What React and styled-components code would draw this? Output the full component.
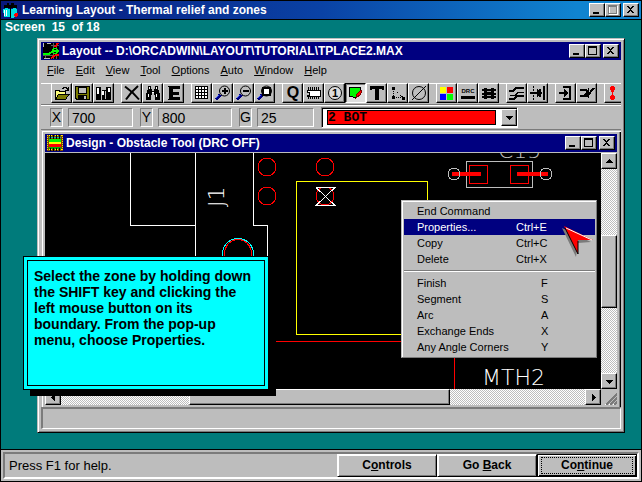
import React from 'react';
import styled, { createGlobalStyle, css } from 'styled-components';

const FACE = '#bdbdbd';
const SHADOW = '#7b7b7b';
const NAVY = '#000080';
const TEAL = '#007b7b';

const GlobalStyle = createGlobalStyle`
  * {
    box-sizing: border-box;
  }
  body {
    margin: 0;
    font-family: 'Liberation Sans', Arial, sans-serif;
    font-size: 11px;
    color: #000;
  }
  button, input, select {
    font: inherit;
    color: inherit;
    margin: 0;
    padding: 0;
    border-radius: 0;
  }
`;

const raised = css`
  background: ${FACE};
  border: 1px solid;
  border-color: #fff #000 #000 #fff;
  box-shadow: inset -1px -1px 0 ${SHADOW};
`;

const Frame = styled.div`
  display: flex;
  flex-direction: column;
  min-height: 100vh;
  border: 1px solid #000;
`;

const TitleBar = styled.header`
  display: flex;
  align-items: center;
  flex: none;
  height: 18px;
  padding: 0 2px;
  gap: 3px;
  color: #fff;
  background: ${({ $fade }) =>
    $fade ? 'linear-gradient(90deg, #08187b, #0a42a5 50%, #1084d0 90%)' : NAVY};
`;

const Title = styled.h1`
  flex: 1;
  margin: 0;
  font-size: 12px;
  line-height: 16px;
  white-space: nowrap;
`;

const WindowButtons = styled.div`
  display: flex;
`;

const WindowButton = styled.button`
  ${raised}
  width: 16px;
  height: 14px;
  margin-left: ${({ $apart }) => ($apart ? 2 : 0)}px;

  svg {
    display: block;
  }
`;

const Stage = styled.main`
  position: relative;
  display: flex;
  flex-direction: column;
  flex: 1;
  padding: 0 16px 16px 36px;
  border: solid #000;
  border-width: 1px 0;
  background: ${TEAL};
`;

const Progress = styled.div`
  height: 18px;
  margin-left: -32px;
  font-size: 12px;
  font-weight: bold;
  line-height: 14px;
  color: #fff;
  white-space: pre;
`;

const LayoutWindow = styled.section`
  display: flex;
  flex-direction: column;
  flex: 1;
  padding: 3px;
  background: ${FACE};
  border: 1px solid;
  border-color: ${FACE} #000 #000 ${FACE};
  box-shadow: inset 1px 1px 0 #fff, inset -1px -1px 0 ${SHADOW};
`;

const MenuBar = styled.nav`
  display: flex;
  gap: 11px;
  height: 23px;
  padding: 2px 6px;
`;

const MenuButton = styled.button`
  border: 0;
  background: none;
  height: 16px;
  line-height: 16px;
`;

const Toolbar = styled.div`
  display: flex;
  gap: 7px;
  height: 22px;
  padding-left: 10px;
  overflow: hidden;
  border-bottom: 1px solid ${SHADOW};
  box-shadow: inset 0 1px 0 #fff;
`;

const ToolGroup = styled.div`
  display: flex;
  flex: none;
`;

const ToolButton = styled.button`
  ${raised}
  display: flex;
  align-items: center;
  justify-content: center;
  width: 21px;
  height: 20px;
  ${({ $pressed }) =>
    $pressed &&
    css`
      border-color: #000 #fff #fff #000;
      box-shadow: inset 1px 1px 0 ${SHADOW};
      background: #dedede;
    `}
`;

const CoordBar = styled.form`
  display: flex;
  align-items: center;
  gap: 7px;
  height: 25px;
  padding-left: 9px;
  border-top: 1px solid #fff;
  border-bottom: 1px solid ${SHADOW};
  font-size: 14px;
`;

const sunken = css`
  border: 1px solid;
  border-color: ${SHADOW} #fff #fff ${SHADOW};
`;

const Coord = styled.div`
  display: flex;
  gap: 5px;
`;

const CoordLabel = styled.label`
  ${sunken}
  width: 13px;
  height: 19px;
  line-height: 17px;
  display: flex;
  justify-content: center;
`;

const CoordInput = styled.input`
  ${sunken}
  width: ${({ $width }) => $width}px;
  height: 19px;
  padding: 0 3px;
  background: ${FACE};
`;

const LayerBox = styled.div`
  display: flex;
  align-items: stretch;
  width: 197px;
  height: 21px;
  padding: 1px 0 1px 5px;
  background: #fff;
  border: 1px solid;
  border-color: ${SHADOW} #fff #fff ${SHADOW};
  box-shadow: inset 1px 1px 0 #000;
`;

const LayerSelect = styled.select`
  flex: 1;
  min-width: 0;
  margin: 1px 5px 1px 0;
  padding-top: 1px;
  appearance: none;
  border: 1px solid #000;
  background: #f00;
  font-family: 'Liberation Mono', monospace;
  font-size: 13px;
  font-weight: bold;
  line-height: 12px;
`;

const DropMark = styled.span`
  ${raised}
  display: flex;
  align-items: center;
  justify-content: center;
  width: 16px;
  pointer-events: none;
`;

const DesignWindow = styled.section`
  display: flex;
  flex-direction: column;
  flex: 1;
  padding: 4px 4px 2px;
  box-shadow: inset 1px 1px 0 ${FACE}, inset 2px 2px 0 #fff,
    inset -1px 0 0 #000, inset -2px 0 0 ${SHADOW};
`;

const Work = styled.div`
  display: grid;
  grid-template-columns: 1fr 16px;
  grid-template-rows: 1fr 16px;
  flex: 1;
  padding-top: 1px;
`;

const Canvas = styled.div`
  position: relative;
  display: flex;
  background: #000;
`;

const Drawing = styled.svg`
  flex: 1;
  width: 100%;
  height: auto;
  min-height: 0;
  font-family: 'DejaVu Sans', sans-serif;
  font-size: 22px;
  font-weight: 200;
`;

const ScrollBar = styled.div`
  display: flex;
  flex-direction: ${({ $vertical }) => ($vertical ? 'column' : 'row')};
  background: repeating-conic-gradient(#fff 0 25%, ${FACE} 0 50%) 0 0 / 2px 2px;
`;

const ScrollButton = styled.button`
  ${raised}
  display: flex;
  align-items: center;
  justify-content: center;
  flex: none;
  width: 16px;
  height: 16px;
`;

const Track = styled.div`
  flex: ${({ $share }) => $share};
`;

const Thumb = styled(Track)`
  ${raised}
`;

const Status = styled.footer`
  height: 22px;
  border: 2px solid;
  border-color: ${SHADOW} #fff #fff ${SHADOW};
  border-bottom-width: 1px;
  border-right-width: 1px;
`;

const PopupMenu = styled.div`
  position: absolute;
  left: 356px;
  top: 47px;
  width: 196px;
  padding: 2px 1px 2px 2px;
  background: ${FACE};
  border: 1px solid;
  border-color: ${FACE} ${SHADOW} ${SHADOW} ${FACE};
  box-shadow: inset 1px 1px 0 #fff;
`;

const PopupItem = styled.button`
  display: grid;
  grid-template-columns: ${({ $wide }) => ($wide ? 99 : 124)}px 1fr;
  width: 100%;
  height: 16px;
  padding: 0 0 0 13px;
  border: 0;
  line-height: 16px;
  text-align: left;
  background: ${({ $active }) => ($active ? NAVY : 'transparent')};
  color: ${({ $active }) => ($active ? '#fff' : '#000')};
`;

const Separator = styled.hr`
  height: 2px;
  margin: 3px 0;
  border: solid;
  border-width: 1px 0;
  border-color: ${SHADOW} transparent #fff;
`;

const Pointer = styled.svg`
  position: absolute;
  left: 159px;
  top: 24px;
`;

const Callout = styled.aside`
  position: absolute;
  left: 22px;
  top: 236px;
  width: 246px;
  padding: 3px;
  background: #0ff;
  border: 1px solid #000;
  box-shadow: 7px 6px 0 #000;
`;

const CalloutText = styled.p`
  margin: 0;
  padding: 7px 8px 37px 6px;
  border: 1px solid #000;
  font-size: 14px;
  font-weight: bold;
  line-height: 16px;
`;

const BottomBar = styled.footer`
  padding: 2px;
  background: ${FACE};
`;

const BottomPanel = styled.div`
  display: flex;
  align-items: center;
  padding-left: 4px;
  border: 2px solid;
  border-color: ${SHADOW} #fff #fff ${SHADOW};
`;

const Hint = styled.span`
  flex: 1;
  font-size: 13px;
`;

const NavButton = styled.button`
  width: 100px;
  height: 23px;
  padding: 1px;
  background: ${FACE};
  border: 1px solid;
  border-color: ${({ $current }) => ($current ? '#000' : '#fff #000 #000 #fff')};
  box-shadow: inset 1px 1px 0 #fff, inset -1px -1px 0
    ${({ $current }) => ($current ? '#000' : SHADOW)};
  font-size: 12px;
  font-weight: bold;

  span {
    display: block;
    margin: 0 2px;
    line-height: 15px;
    border: 1px dotted ${({ $current }) => ($current ? '#000' : 'transparent')};
  }
`;

function Icon({ children, size = 16 }) {
  return (
    <svg
      width={size}
      height={size}
      viewBox="0 0 16 16"
      fill="none"
      stroke="#000"
      shapeRendering="crispEdges"
      aria-hidden="true"
    >
      {children}
    </svg>
  );
}

function Glyph({ x, y, size, children }) {
  return (
    <text
      x={x}
      y={y}
      fontSize={size}
      fontWeight="bold"
      textAnchor="middle"
      fill="#000"
      stroke="none"
    >
      {children}
    </text>
  );
}

const lens = <circle cx="9.5" cy="6" r="5" shapeRendering="auto" />;
const handle = (
  <>
    <path d="M5.5 9.5L1 14.5" stroke="#000080" strokeWidth="3" />
    <path d="M4 10L1 13" stroke="#3050ff" />
  </>
);

const icons = {
  open: (
    <>
      <path d="M1.5 14V5.5H5L6 6.5H11.5V9" fill="#ffff7b" />
      <path d="M1.5 14.5L4.5 9.5H15L11.5 14.5Z" fill="#7b7b00" />
      <path d="M8 3.5H9V2.5H12V3.5H13V5.5M11 5.5H15M14.5 2V5" />
    </>
  ),
  save: (
    <>
      <path d="M.5 1.5H14.5V14.5H2L.5 13Z" fill="#7b7b00" />
      <path d="M3.5 2H11.5V8.5H3.5Z" fill={FACE} />
      <path d="M3 10H12V15H3Z" fill="#000" stroke="none" />
      <path d="M9 11H11V14H9Z" fill={FACE} stroke="none" />
    </>
  ),
  library: (
    <>
      <path
        d="M0 2H5V15H0ZM6 5H10V15H6ZM10 2H15V15H10Z"
        fill="#000"
        stroke="none"
      />
      <path d="M1 3H3V9H1ZM6 6H8V10H6ZM12 3H14V7H12Z" fill="#fff" stroke="none" />
      <path d="M5.5 2V15M9.5 6V14" stroke={FACE} />
    </>
  ),
  remove: (
    <g shapeRendering="auto">
      <path d="M1 1.5Q9 7 15 14.5" strokeWidth="2" />
      <path d="M14 1Q7 7 2 14.5" strokeWidth="2" />
    </g>
  ),
  find: (
    <>
      <path
        d="M3 1H6V4H7V6H9V4H10V1H13V4L15 9V15H10V10H9V8H7V10H6V15H1V9L3 4Z"
        fill="#000"
        stroke="none"
      />
      <path d="M4.5 2V4M11.5 2V4M3.5 9V12M11.5 9V12M7 7.5H9" stroke="#fff" />
    </>
  ),
  edit: (
    <path
      d="M2 1H14V4H7V6.500H13V9.500H7V12H14V15H2V14H3V2H2Z"
      fill="#000"
      stroke="none"
    />
  ),
  grid: (
    <>
      <path d="M1.5 1.5H13.5V13.5H1.5Z" fill="#fff" />
      <path d="M1 4.5H14M1 7.5H14M1 10.5H14M4.5 1V14M7.5 1V14M10.5 1V14" />
    </>
  ),
  zoomIn: (
    <>
      {handle}
      {lens}
      <path d="M9.5 3V9M6.5 6H12.5" strokeWidth="2" />
    </>
  ),
  zoomOut: (
    <>
      {handle}
      {lens}
      <path d="M6.5 6H12.5" strokeWidth="2" />
    </>
  ),
  zoomAll: (
    <>
      {handle}
      {lens}
      <path d="M6 2.5H13V9.5H6Z" fill="#fff" strokeWidth="2" />
    </>
  ),
  query: <Glyph x="8" y="13" size="16">Q</Glyph>,
  chip: (
    <>
      <path d="M1.5 5.5H14.5V11.5H1.5V10H3V7H1.5Z" fill="#fff" />
      <path d="M2.5 2V5M4.5 2V5M6.5 2V5M8.5 2V5M10.5 2V5M12.5 2V5M2.5 12V14M4.5 12V14M6.5 12V14M8.5 12V14M10.5 12V14M12.5 12V14" />
    </>
  ),
  pin: (
    <>
      <circle cx="8" cy="8" r="6.5" fill="#dedede" shapeRendering="auto" />
      <Glyph x="8" y="12" size="11">1</Glyph>
    </>
  ),
  obstacle: (
    <>
      <path d="M1.5 2.5H12.5V6L8 12.5H6L4 11.5H1.5Z" fill="#00f700" />
      <path d="M13 5L9 9L8 13L12 10L14 6Z" fill="#f00" stroke="#7b0000" />
    </>
  ),
  text: <path d="M1 1H15V5H13V4H10V15H6V4H3V5H1Z" fill="#000" stroke="none" />,
  connect: (
    <>
      <path d="M3 3.5V12.5H13L3 3.5" strokeDasharray="1 1" />
      <path d="M2 2H5V5H2ZM2 11H5V14H2ZM12 12H15V15H12Z" fill="#000" stroke="none" />
    </>
  ),
  pad: (
    <g shapeRendering="auto">
      <circle cx="8" cy="8" r="6.5" />
      <path d="M1 15L15 1" />
    </g>
  ),
  color: (
    <g stroke="none">
      <path d="M1 2H7V8H1Z" fill="#ff0" />
      <path d="M8 2H14V8H8Z" fill="#f00" />
      <path d="M1 9H7V15H1Z" fill="#00f" />
      <path d="M8 9H14V15H8Z" fill="#0f0" />
    </g>
  ),
  drc: (
    <>
      <Glyph x="8" y="8" size="6">DRC</Glyph>
      <path d="M1 11H15V14H1Z" fill="#000" stroke="none" />
    </>
  ),
  reconnect: (
    <>
      <path d="M3 3H6V4H10V3H13V14H10V13H6V14H3Z" fill="#000" stroke="none" />
      <path d="M1 5H15M1 8.5H15M1 12H15" strokeWidth="2" />
      <path d="M6 6.5H10M6 10.5H10" stroke="#9c9c9c" />
    </>
  ),
  autopath: (
    <>
      <path d="M0 6H4L7 3H15M0 14H5L8 11H15" strokeWidth="2" />
      <path d="M1 10.5H6L9 7.5H15" />
    </>
  ),
  shove: (
    <>
      <path d="M3.5 1V15" strokeDasharray="2 1" />
      <path d="M0 8H10M14 1V15M10 4V12" strokeWidth="2" />
      <path d="M7 4L12 8L7 12Z" fill="#000" />
    </>
  ),
  editSegment: (
    <>
      <path d="M5 2H12V14H5M1 8H8" strokeWidth="2" />
      <path d="M6 4L10 8L6 12Z" fill="#000" />
    </>
  ),
  addRoute: (
    <>
      <path d="M1 4.5H7L8 6M1 11H8L15 3" strokeWidth="2" />
      <path d="M5 11L9 5V12Z" fill="#000" />
    </>
  ),
  abort: (
    <path
      d="M4 1H7V2H8V5H7V7H6V10H7V11H8V14H7V15H4V14H3V11H4V10H5V7H4V5H3V2H4Z"
      fill="#f00"
      stroke="none"
    />
  ),
};

const toolGroups = [
  ['open', 'save', 'library'],
  ['remove', 'find', 'edit'],
  ['grid', 'zoomIn', 'zoomOut', 'zoomAll'],
  ['query', 'chip', 'pin', 'obstacle', 'text', 'connect', 'pad'],
  ['color', 'drc', 'reconnect'],
  ['autopath', 'shove'],
  ['editSegment', 'addRoute'],
  ['abort'],
];

const menus = ['File', 'Edit', 'View', 'Tool', 'Options', 'Auto', 'Window', 'Help'];

const commands = [
  ['End Command', ''],
  ['Properties...', 'Ctrl+E'],
  ['Copy', 'Ctrl+C'],
  ['Delete', 'Ctrl+X'],
];

const shapes = [
  ['Finish', 'F'],
  ['Segment', 'S'],
  ['Arc', 'A'],
  ['Exchange Ends', 'X'],
  ['Any Angle Corners', 'Y'],
];

function Controls({ disabled }) {
  const ink = disabled ? SHADOW : '#000';
  return (
    <WindowButtons>
      <WindowButton aria-label="Minimize">
        <svg width="14" height="12" shapeRendering="crispEdges">
          <path d="M3 8H9V10H3Z" />
        </svg>
      </WindowButton>
      <WindowButton aria-label="Maximize" disabled={disabled}>
        <svg width="14" height="12" fill="none" shapeRendering="crispEdges">
          {disabled && <path d="M3.5 2.5H11.5V10.5H3.5Z" stroke="#fff" />}
          <path d="M2.5 1.5H10.5V9.5H2.5ZM2 2.5H11" stroke={ink} />
        </svg>
      </WindowButton>
      <WindowButton $apart aria-label="Close">
        <svg width="14" height="12" shapeRendering="crispEdges">
          <path d="M3 2H5V3H6V4H7V3H8V2H10V3H9V4H8V5H7V6H8V7H9V8H10V9H8V8H7V7H6V8H5V9H3V8H4V7H5V6H6V5H5V4H4V3H3Z" />
        </svg>
      </WindowButton>
    </WindowButtons>
  );
}

function Arrow({ turn = 0 }) {
  return (
    <svg width="9" height="9" shapeRendering="crispEdges" aria-hidden="true">
      <path d="M1 3H8V4H7V5H6V6H5V7H4V6H3V5H2V4H1Z" transform={`rotate(${turn} 4.5 4.5)`} />
    </svg>
  );
}

function BookIcon() {
  return (
    <Icon>
      <path d="M1 3H4V1H6V3H8V1H11V3H14V6H1Z" fill="#000" stroke="none" />
      <path d="M0 7L3 6L7 7L8 16L5 15H1ZM8 7L12 6L14 7V15L8 16Z" fill="#00dede" stroke="none" />
      <path d="M1.5 8V14M3.5 8V14" stroke="#fff" />
      <path d="M7.5 6V16" />
      <path d="M12 11H15V14H14V15H12V14H11V12H12Z" fill="#f00" stroke="none" />
    </Icon>
  );
}

function LayoutIcon() {
  return (
    <Icon>
      <path d="M0 0H16V16H0Z" fill="#000" stroke="none" />
      <path d="M10.5 0V16M13.5 0V16M2.5 12V16M0 12.5H16M8 2.5H16" stroke="#5a5a5a" />
      <path d="M0 11H6L10 8H16" stroke="#0f0" strokeWidth="2" />
      <circle cx="12" cy="8" r="2.5" stroke="#0f0" />
      <path d="M12 4L15 0M8 15L13 12H16" stroke="#f00" strokeWidth="2" />
      <path d="M1 15.5H7M.5 0V4M4 .5H8" stroke="#bdbdbd" />
    </Icon>
  );
}

function DesignIcon() {
  return (
    <Icon>
      <path d="M0 0H16V16H0Z" fill="#7b4a00" stroke="none" />
      <path d="M2 5.5H14" stroke="#00f700" strokeWidth="3" />
      <path d="M2 8H14" stroke="#ff0" strokeWidth="2" />
      <path d="M2 10.5H14" stroke="#f00" strokeWidth="3" />
      <path d="M2 2.5H14" stroke="#00b5b5" />
      <path d="M2 13H14" stroke="#00b500" strokeWidth="2" />
      <path d="M0 14.5H16M0 .5H16" stroke="#ff0" strokeDasharray="1 1" />
      <path d="M3.5 0V4M6.5 0V4M9.5 0V4M12.5 0V4M3.5 13V16M6.5 13V16M9.5 13V16M12.5 13V16" />
      <path d="M.5 0V16M15 0V16" stroke="#ffde00" strokeDasharray="1 1" />
    </Icon>
  );
}

function Board() {
  return (
    <Drawing fill="none" stroke="#fff" shapeRendering="crispEdges">
      <path d="M85.5 0V72.5H150.5M150.5 0V237M208.5 0V72.5H222.5V237" />
      <path d="M177.5 237V101A15.5 15.5 0 0 1 208.5 101V237" stroke="#0ff" />
      <path d="M179.5 237V101A13.5 14.5 0 0 1 206.5 101V237" stroke="#f00" />
      <g stroke="#f00">
        <circle cx="222" cy="14" r="9" />
        <circle cx="280" cy="14" r="9" />
        <circle cx="222" cy="43" r="9" />
        <circle cx="280" cy="43" r="9" />
        <path d="M230 188.5H409.5V237" />
      </g>
      <path d="M271 34.5H290L271 52.5H290L271 34.5" />
      <path d="M251.5 28.5H382.5V181.5H251.5Z" stroke="#ff0" />
      <path d="M421.5 8.5H487.5V34.5H421.5Z" stroke={FACE} />
      <path d="M424.5 12.5H442.5V30.5H424.5ZM465.5 12.5H483.5V30.5H465.5Z" stroke="#f00" />
      <path d="M407 21H436M472 21H503" stroke="#f00" strokeWidth="4" />
      <circle cx="409" cy="21" r="6" stroke={FACE} />
      <circle cx="501" cy="21" r="6" stroke={FACE} />
      <g fill="#fff" stroke="none">
        <text x="453" y="5" fill={FACE}>C15</text>
        <text x="437" y="232">MTH2</text>
        <text transform="translate(179 54) rotate(-90)">J1</text>
      </g>
    </Drawing>
  );
}

function Popup() {
  return (
    <PopupMenu role="menu">
      {commands.map(([name, keys]) => (
        <PopupItem key={name} role="menuitem" $wide $active={name === 'Properties...'}>
          <span>{name}</span>
          <span>{keys}</span>
        </PopupItem>
      ))}
      <Separator />
      {shapes.map(([name, keys]) => (
        <PopupItem key={name} role="menuitem">
          <span>{name}</span>
          <span>{keys}</span>
        </PopupItem>
      ))}
      <Pointer width="36" height="34" aria-hidden="true">
        <path d="M1 3L15 32L17 18L30 17Z" fill={SHADOW} />
        <path d="M3 1L17 29V15L32 15Z" fill="#f00" />
        <path d="M4 3L17 29V16" fill="none" stroke="#000" />
        <path d="M5 3L31 15" stroke="#fff" />
      </Pointer>
    </PopupMenu>
  );
}

export default function App() {
  return (
    <Frame>
      <GlobalStyle />
      <TitleBar $fade>
        <BookIcon />
        <Title>Learning Layout - Thermal relief and zones</Title>
        <Controls disabled />
      </TitleBar>

      <Stage>
        <Progress>{'Screen  15  of 18'}</Progress>
        <LayoutWindow>
          <TitleBar>
            <LayoutIcon />
            <Title as="h2">Layout -- D:\ORCADWIN\LAYOUT\TUTORIAL\TPLACE2.MAX</Title>
            <Controls />
          </TitleBar>
          <MenuBar>
            {menus.map((name) => (
              <MenuButton key={name}>
                <u>{name[0]}</u>
                {name.slice(1)}
              </MenuButton>
            ))}
          </MenuBar>
          <Toolbar>
            {toolGroups.map((group) => (
              <ToolGroup key={group[0]}>
                {group.map((tool) => (
                  <ToolButton key={tool} aria-label={tool} $pressed={tool === 'obstacle'}>
                    <Icon>{icons[tool]}</Icon>
                  </ToolButton>
                ))}
              </ToolGroup>
            ))}
          </Toolbar>
          <CoordBar>
            <Coord>
              <CoordLabel htmlFor="x">X</CoordLabel>
              <CoordInput id="x" $width={65} defaultValue="700" />
            </Coord>
            <Coord>
              <CoordLabel htmlFor="y">Y</CoordLabel>
              <CoordInput id="y" $width={74} defaultValue="800" />
            </Coord>
            <Coord>
              <CoordLabel htmlFor="g">G</CoordLabel>
              <CoordInput id="g" $width={57} defaultValue="25" />
            </Coord>
            <LayerBox>
              <LayerSelect aria-label="Layer">
                <option>2 BOT</option>
              </LayerSelect>
              <DropMark>
                <Arrow />
              </DropMark>
            </LayerBox>
          </CoordBar>

          <DesignWindow>
            <TitleBar>
              <DesignIcon />
              <Title as="h2">Design - Obstacle Tool (DRC OFF)</Title>
              <Controls />
            </TitleBar>
            <Work>
              <Canvas>
                <Board />
                <Popup />
              </Canvas>
              <ScrollBar $vertical>
                <ScrollButton aria-label="Scroll up">
                  <Arrow turn={180} />
                </ScrollButton>
                <Track $share={67} />
                <Thumb $share={73} />
                <Track $share={66} />
                <ScrollButton aria-label="Scroll down">
                  <Arrow />
                </ScrollButton>
              </ScrollBar>
              <ScrollBar>
                <ScrollButton aria-label="Scroll left">
                  <Arrow turn={90} />
                </ScrollButton>
                <Track $share={128} />
                <Thumb $share={260} />
                <Track $share={136} />
                <ScrollButton aria-label="Scroll right">
                  <Arrow turn={-90} />
                </ScrollButton>
              </ScrollBar>
              <Icon>
                <path d="M4 16L16 4M8 16L16 8M12 16L16 12" stroke="#fff" />
                <path d="M5 16L16 5M9 16L16 9M13 16L16 13" stroke={SHADOW} strokeWidth="2" />
              </Icon>
            </Work>
          </DesignWindow>
          <Status />
        </LayoutWindow>

        <Callout>
          <CalloutText>
            Select the zone by holding down the SHIFT key and clicking the left
            mouse button on its boundary. From the pop-up menu, choose Properties.
          </CalloutText>
        </Callout>
      </Stage>

      <BottomBar>
        <BottomPanel>
          <Hint>Press F1 for help.</Hint>
          <NavButton>
            <span>C<u>o</u>ntrols</span>
          </NavButton>
          <NavButton>
            <span>Go <u>B</u>ack</span>
          </NavButton>
          <NavButton $current>
            <span>Co<u>n</u>tinue</span>
          </NavButton>
        </BottomPanel>
      </BottomBar>
    </Frame>
  );
}
